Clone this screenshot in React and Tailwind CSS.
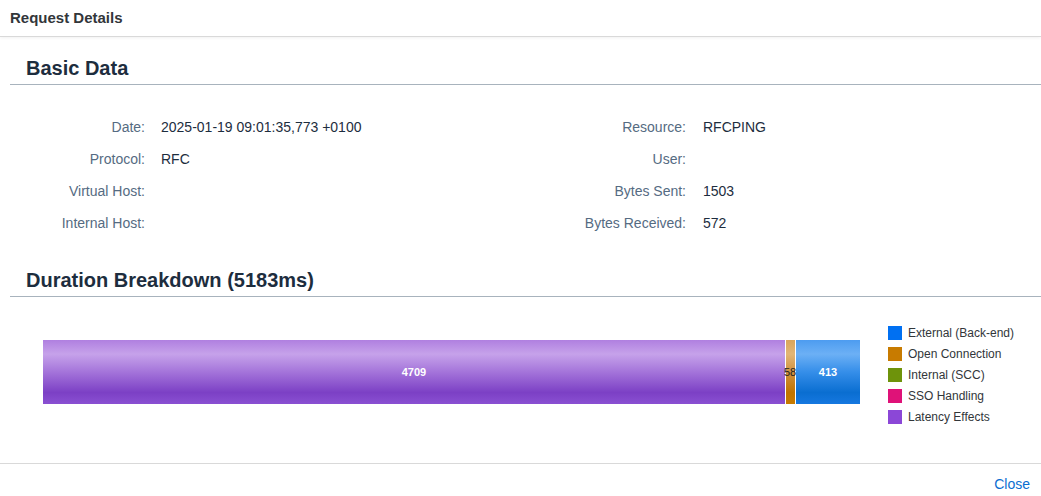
export default function App() {
  const left = [
    ["Date:", "2025-01-19 09:01:35,773 +0100"],
    ["Protocol:", "RFC"],
    ["Virtual Host:", ""],
    ["Internal Host:", ""],
  ];
  const right = [
    ["Resource:", "RFCPING"],
    ["User:", ""],
    ["Bytes Sent:", "1503"],
    ["Bytes Received:", "572"],
  ];
  const legend = [
    ["External (Back-end)", "bg-[#0070f2]"],
    ["Open Connection", "bg-[#c87b00]"],
    ["Internal (SCC)", "bg-[#6e930b]"],
    ["SSO Handling", "bg-[#df1278]"],
    ["Latency Effects", "bg-[#8b47d7]"],
  ];

  return (
    <div className="w-[1041px] h-[496px] bg-white flex flex-col font-['Liberation_Sans',sans-serif] text-[#1d2d3e]">
      <div className="h-[37px] flex items-center px-[10px] border-b border-[#d9d9d9] shadow-[0_1px_3px_rgba(0,0,0,0.06)]">
        <span className="text-[15px] font-bold text-[#32363a]">Request Details</span>
      </div>

      <div className="flex-1 pl-[10px]">
        <div className="mt-[19px] border-b border-[#a8b3bd] h-[29px] pl-[16px]">
          <h2 className="text-[20px] font-bold leading-[25px]">Basic Data</h2>
        </div>

        <div className="flex mt-[26px] text-[14px]">
          <div className="w-[530px] flex flex-col">
            {left.map(([k, v]) => (
              <div key={k} className="h-[32px] flex items-center">
                <span className="w-[135px] text-right text-[#556b82]">{k}</span>
                <span className="ml-[16px]">{v}</span>
              </div>
            ))}
          </div>
          <div className="flex flex-col">
            {right.map(([k, v]) => (
              <div key={k} className="h-[32px] flex items-center">
                <span className="w-[146px] text-right text-[#556b82]">{k}</span>
                <span className="ml-[17px]">{v}</span>
              </div>
            ))}
          </div>
        </div>

        <div className="mt-[29px] border-b border-[#a8b3bd] h-[29px] pl-[16px]">
          <h2 className="text-[20px] font-bold leading-[25px]">Duration Breakdown (5183ms)</h2>
        </div>

        <div className="flex mt-[29px]">
          <div className="ml-[33px] w-[817px] h-[64px] mt-[14px] flex text-[11px] font-bold">
            <div className="w-[742px] h-full flex items-center justify-center text-white bg-[linear-gradient(to_bottom,#b07fe0_0%,#c6a2ea_22%,#a474da_50%,#7c40c5_82%,#8a50d2_100%)]">
              4709
            </div>
            <div className="w-[1px] bg-white" />
            <div className="w-[9px] h-full relative bg-[linear-gradient(to_bottom,#d9a55c_0%,#e2b676_22%,#cf9140_50%,#c07400_82%,#c87b00_100%)]">
              <span className="absolute left-[-2px] top-[24px] font-normal text-[#222]">58</span>
            </div>
            <div className="w-[1px] bg-white" />
            <div className="flex-1 h-full flex items-center justify-center text-white bg-[linear-gradient(to_bottom,#4d9cf0_0%,#6cb0f5_22%,#358ee9_50%,#0a6ed1_82%,#1678e0_100%)]">
              413
            </div>
          </div>

          <div className="ml-[28px] flex flex-col gap-[8px] text-[12px] text-[#32363a]">
            {legend.map(([t, c]) => (
              <div key={t} className="flex items-center h-[13px]">
                <span className={`w-[14px] h-[14px] ${c}`} />
                <span className="ml-[6px]">{t}</span>
              </div>
            ))}
          </div>
        </div>
      </div>

      <div className="h-[33px] border-t border-[#d9d9d9] flex items-center justify-end pr-[11px] pt-[8px]">
        <span className="text-[14px] text-[#0a6ed1]">Close</span>
      </div>
    </div>
  );
}
